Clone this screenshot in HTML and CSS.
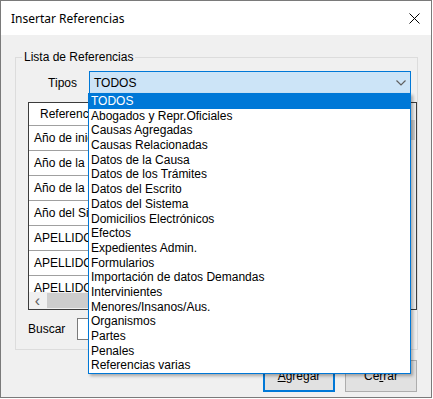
FILE: index.html
```html
<!DOCTYPE html>
<html lang="es">
<head>
  <meta charset="UTF-8">
  <title>Insertar Referencias</title>
  <link rel="stylesheet" href="styles.css">
</head>
<body>
<div class="window">
  <div class="titlebar">
    <span class="title">Insertar Referencias</span>
    <svg class="close-icon" width="11" height="11" viewBox="0 0 11 11">
      <path d="M0.5 0.5 L10.5 10.5 M10.5 0.5 L0.5 10.5" stroke="#000" stroke-width="1" fill="none"/>
    </svg>
  </div>

  <div class="content">
    <div class="group">
      <span class="group-title">Lista de Referencias</span>

      <div class="tipos-row">
        <label class="tipos-label">Tipos</label>
        <div class="combo">
          <span class="combo-value">TODOS</span>
          <svg class="chevron" width="10" height="6" viewBox="0 0 10 6">
            <path d="M0.5 0.5 L5 5 L9.5 0.5" stroke="#606060" stroke-width="1.2" fill="none"/>
          </svg>

          <ul class="dropdown">
            <li class="selected">TODOS</li>
            <li>Abogados y Repr.Oficiales</li>
            <li>Causas Agregadas</li>
            <li>Causas Relacionadas</li>
            <li>Datos de la Causa</li>
            <li>Datos de los Trámites</li>
            <li>Datos del Escrito</li>
            <li>Datos del Sistema</li>
            <li>Domicilios Electrónicos</li>
            <li>Efectos</li>
            <li>Expedientes Admin.</li>
            <li>Formularios</li>
            <li>Importación de datos Demandas</li>
            <li>Intervinientes</li>
            <li>Menores/Insanos/Aus.</li>
            <li>Organismos</li>
            <li>Partes</li>
            <li>Penales</li>
            <li>Referencias varias</li>
          </ul>
        </div>
      </div>

      <div class="grid">
        <div class="grid-body">
          <div class="grid-row grid-header">
            <div class="cell">Referencia</div>
            <div class="cell">Descripción</div>
          </div>
          <div class="grid-row"><div class="cell">Año de inicio</div><div class="cell">Año de inicio de la causa</div></div>
          <div class="grid-row"><div class="cell">Año de la causa</div><div class="cell">Año de la causa</div></div>
          <div class="grid-row"><div class="cell">Año de la fecha</div><div class="cell">Año de la fecha actual</div></div>
          <div class="grid-row"><div class="cell">Año del Sistema</div><div class="cell">Año del sistema</div></div>
          <div class="grid-row"><div class="cell">APELLIDO</div><div class="cell">Apellido del actor</div></div>
          <div class="grid-row"><div class="cell">APELLIDO</div><div class="cell">Apellido del demandado</div></div>
          <div class="grid-row"><div class="cell">APELLIDO</div><div class="cell">Apellido del letrado</div></div>
        </div>

        <div class="vscroll">
          <span class="sb-arrow">&#9652;</span>
          <span class="v-thumb"></span>
          <span class="sb-track"></span>
          <span class="sb-arrow">&#9662;</span>
        </div>

        <div class="hscroll">
          <span class="sb-arrow">&lsaquo;</span>
          <span class="h-thumb"></span>
          <span class="sb-track"></span>
          <span class="sb-arrow">&rsaquo;</span>
        </div>
        <div class="corner"></div>
      </div>

      <div class="buscar-row">
        <label class="buscar-label">Buscar</label>
        <div class="textbox"></div>
      </div>
    </div>

    <div class="buttons">
      <button class="btn btn-default"><u>A</u>gregar</button>
      <button class="btn">Ce<u>r</u>rar</button>
    </div>
  </div>
</div>
</body>
</html>
```

FILE: styles.css
```css
* {
  margin: 0;
  padding: 0;
  box-sizing: border-box;
}

body {
  background: #ffffff;
  font-family: 'Liberation Sans', Arial, sans-serif;
  font-size: 12px;
  color: #000000;
}

.window {
  width: 432px;
  height: 398px;
  border: 1px solid #7a7a7a;
  display: flex;
  flex-direction: column;
}

.titlebar {
  height: 34px;
  background: #ffffff;
  display: flex;
  align-items: center;
  justify-content: space-between;
  padding: 0 11px 0 10px;
}

.title {
  font-family: 'Noto Sans', 'Open Sans', sans-serif;
  font-size: 12px;
}

.close-icon {
  margin-top: 1px;
}

.content {
  flex: 1;
  background: #f0f0f0;
  padding: 22px 0 0 14px;
}

/* Group box */
.group {
  width: 403px;
  height: 293px;
  border: 1px solid #dcdcdc;
}

.group-title {
  display: block;
  width: fit-content;
  margin: -8px 0 0 6px;
  padding: 0 2px;
  line-height: 14px;
  background: #f0f0f0;
}

.tipos-row {
  display: flex;
  align-items: center;
  margin-top: 7px;
}

.tipos-label {
  width: 73px;
  text-align: right;
  padding-right: 12px;
}

.combo {
  position: relative;
  width: 322px;
  height: 23px;
  border: 1px solid #0078d7;
  background: #cce4f7;
  display: flex;
  align-items: center;
  justify-content: space-between;
  padding: 0 4px 0 4px;
}

.chevron {
  margin-right: 0;
}

.dropdown {
  position: absolute;
  top: 100%;
  left: -2px;
  width: 323px;
  list-style: none;
  background: #ffffff;
  border: 1px solid #0078d7;
  box-shadow: 2px 2px 3px rgba(0, 0, 0, 0.3);
  z-index: 10;
}

.dropdown li {
  height: 14.7px;
  line-height: 14.7px;
  padding-left: 2px;
  white-space: nowrap;
}

.dropdown li.selected {
  background: #0078d7;
  color: #ffffff;
}

/* Data grid */
.grid {
  margin: 8px 0 0 12px;
  width: 389px;
  height: 208px;
  border: 1px solid #3c3c3c;
  background: #ffffff;
  display: grid;
  grid-template-columns: 1fr 17px;
  grid-template-rows: 1fr 17px;
  overflow: hidden;
}

.grid-body {
  overflow: hidden;
}

.grid-row {
  display: flex;
  height: 25px;
  border-bottom: 1px solid #a0a0a0;
}

.grid-header {
  height: 23px;
}

.cell {
  width: 140px;
  flex-shrink: 0;
  display: flex;
  align-items: center;
  padding-left: 5px;
  border-right: 1px solid #a0a0a0;
  white-space: nowrap;
  overflow: hidden;
}

.cell + .cell {
  width: 300px;
}

.grid-header .cell:first-child {
  padding-left: 11px;
}

.vscroll,
.hscroll {
  background: #f0f0f0;
  display: flex;
}

.vscroll {
  flex-direction: column;
}

.sb-arrow {
  width: 17px;
  height: 17px;
  flex-shrink: 0;
  display: flex;
  align-items: center;
  justify-content: center;
  color: #606060;
  font-size: 11px;
}

.hscroll .sb-arrow {
  font-size: 16px;
  line-height: 17px;
}

.v-thumb {
  height: 20px;
  margin: 0 1px;
  background: #cdcdcd;
}

.h-thumb {
  width: 220px;
  margin: 1px 0 1px 1px;
  background: #cdcdcd;
}

.sb-track {
  flex: 1;
}

.corner {
  background: #f0f0f0;
}

.buscar-row {
  display: flex;
  align-items: center;
  margin: 8px 0 0 12px;
}

.buscar-label {
  width: 49px;
}

.textbox {
  width: 334px;
  height: 22px;
  border: 1px solid #7a7a7a;
  background: #ffffff;
}

/* Dialog buttons */
.buttons {
  display: flex;
  justify-content: flex-end;
  gap: 10px;
  margin-top: 10px;
  padding-right: 14px;
}

.btn {
  width: 72px;
  height: 32px;
  background: #e1e1e1;
  border: 1px solid #adadad;
  font-family: inherit;
  font-size: 12px;
  color: #000000;
}

.btn-default {
  border: 2px solid #0078d7;
}
```
